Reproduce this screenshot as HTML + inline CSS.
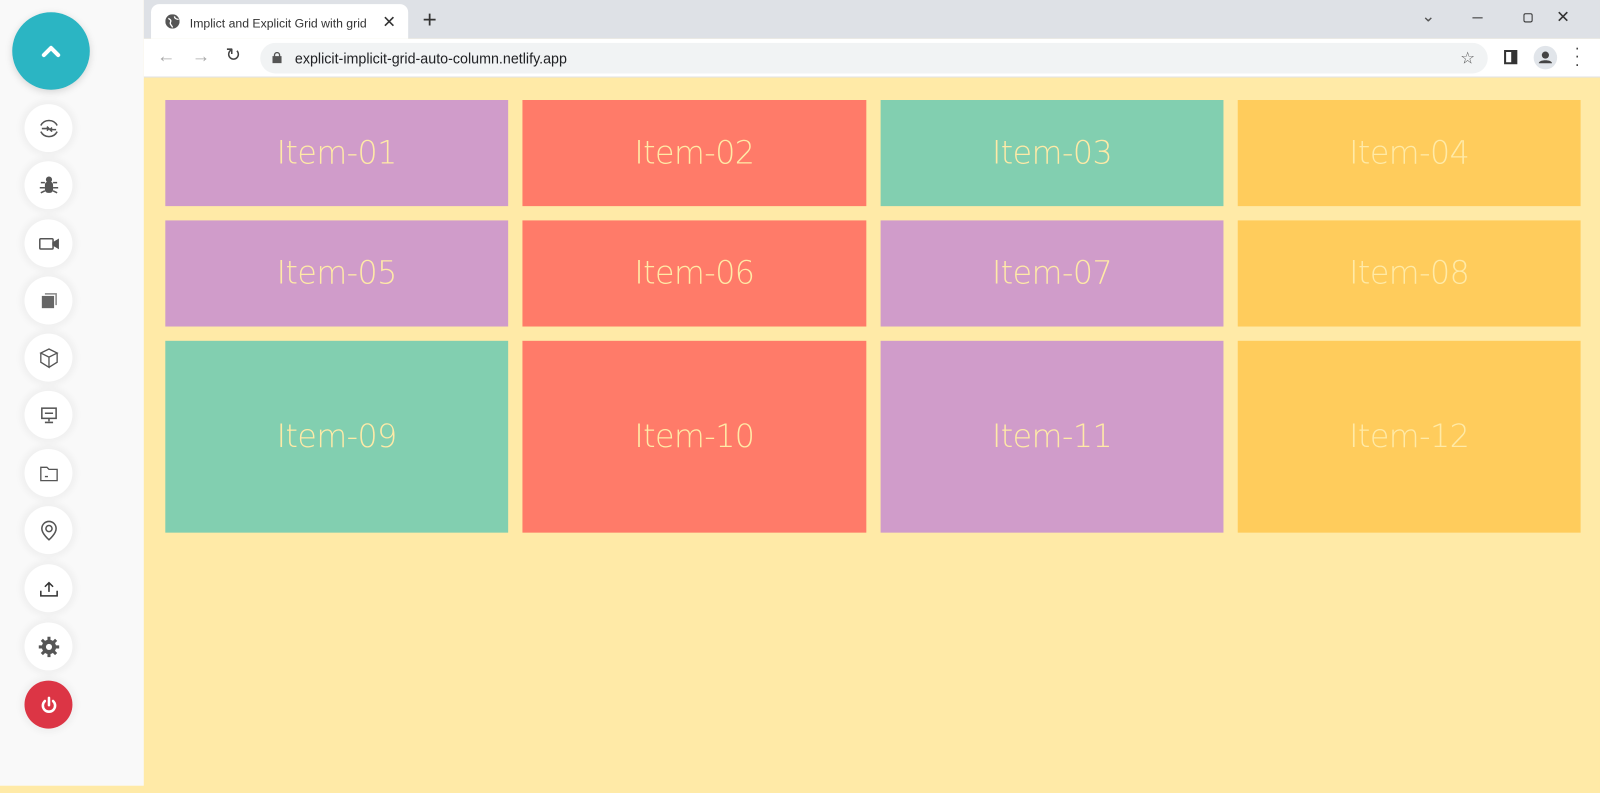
<!DOCTYPE html>
<html><head><meta charset="utf-8"><style>
*{margin:0;padding:0;box-sizing:border-box}
body{width:1600px;height:769px;overflow:hidden;background:#ffeaa7;font-family:"Liberation Sans",sans-serif;position:relative}
#w{position:absolute;left:0;top:0;width:1568px;height:754px;transform:scale(1.0204);transform-origin:0 0}
.side{position:absolute;left:0;top:0;width:141px;height:770px;background:#f9f9f9}
.big{position:absolute;left:12px;top:12px;width:76px;height:76px;border-radius:50%;background:#2bb5c3;box-shadow:0 2px 8px rgba(0,0,0,.15)}
.btn{position:absolute;left:24px;width:47px;height:47px;border-radius:50%;background:#fff;box-shadow:0 0 6px 4px rgba(0,0,0,.04);display:flex;align-items:center;justify-content:center}
.btn svg{width:24px;height:24px}
.tabbar{position:absolute;left:141px;top:0;width:1427px;height:38px;background:#dee1e6}
.tab{position:absolute;left:148px;top:4px;width:252px;height:34px;background:#fff;border-radius:8px 8px 0 0;font-size:12px;color:#333;padding:12px 0 0 38px}
.addr{position:absolute;left:141px;top:38px;width:1427px;height:38px;background:#fff;border-bottom:1px solid #e0e0e0}
.url{position:absolute;left:255px;top:42px;width:1203px;height:30px;border-radius:15px;background:#f1f3f4;font-size:14px;color:#202124;padding:7px 0 0 34px}
.content{position:absolute;left:141px;top:77px;width:1427px;height:700px;background:#ffeaa7}
.it{position:absolute;display:flex;align-items:center;justify-content:center;color:#ffeaa7;font-size:31px;font-family:"DejaVu Sans","Liberation Sans",sans-serif;font-weight:300;letter-spacing:-0.5px}
.p{background:#d09cca}.r{background:#ff7b69}.g{background:#82cfb0}.y{background:#ffcc5c}
</style></head><body><div id="w">
<div class="side">
<div class="big"><svg width="76" height="76"><path d="M31 42 L38 35 L45 42" stroke="#fff" stroke-width="4" fill="none" stroke-linecap="round" stroke-linejoin="round"/></svg></div>
<div class="btn" style="top:102px"><svg viewBox="0 0 24 24" fill="none" stroke="#555" stroke-width="1.5"><path d="M4 9a9 9 0 0 1 16 0M20 15a9 9 0 0 1-16 0M5 12h7M10 10l2 2-2 2M19 13h-6M15 11l-2 2 2 2"/></svg></div>
<div class="btn" style="top:158px"><svg viewBox="0 0 24 24" fill="#555"><rect x="8" y="8" width="8" height="11" rx="3"/><circle cx="12" cy="6" r="3"/><path d="M4 9h4M16 9h4M3 14h5M16 14h5M4 19l4-2M20 19l-4-2" stroke="#555" stroke-width="1.5"/></svg></div>
<div class="btn" style="top:215px"><svg viewBox="0 0 24 24" fill="none" stroke="#555" stroke-width="1.5"><rect x="3" y="7" width="13" height="10" rx="1"/><path d="M16 11l5-3v8l-5-3z" fill="#555"/></svg></div>
<div class="btn" style="top:271px"><svg viewBox="0 0 24 24" fill="#555"><rect x="5" y="7" width="12" height="12" fill="#666"/><path d="M8 5h11v11" stroke="#888" fill="none" stroke-width="1.5"/></svg></div>
<div class="btn" style="top:327px"><svg viewBox="0 0 24 24" fill="none" stroke="#555" stroke-width="1.3"><path d="M12 3l8 4-8 4-8-4zM4 7v9l8 5V11M20 7v9l-8 5"/></svg></div>
<div class="btn" style="top:383px"><svg viewBox="0 0 24 24" fill="none" stroke="#555" stroke-width="1.5"><rect x="5" y="5" width="14" height="10"/><path d="M8 10h8M12 15v3M8 19h8"/></svg></div>
<div class="btn" style="top:440px"><svg viewBox="0 0 24 24" fill="none" stroke="#555" stroke-width="1.3"><path d="M4 6h6l2 2h8v11H4zM8 15h3"/></svg></div>
<div class="btn" style="top:496px"><svg viewBox="0 0 24 24" fill="none" stroke="#555" stroke-width="1.5"><path d="M12 21s-7-6-7-11a7 7 0 0 1 14 0c0 5-7 11-7 11z"/><circle cx="12" cy="10" r="3"/></svg></div>
<div class="btn" style="top:553px"><svg viewBox="0 0 24 24" fill="none" stroke="#333" stroke-width="1.5"><path d="M12 15V6M8 10l4-4 4 4M4 14v5h16v-5"/></svg></div>
<div class="btn" style="top:610px"><svg viewBox="0 0 24 24" fill="#555"><circle cx="12" cy="12" r="7"/><path d="M12 2v20M2 12h20M5 5l14 14M19 5L5 19" stroke="#555" stroke-width="3"/><circle cx="12" cy="12" r="3" fill="#fff"/></svg></div>
<div class="btn" style="top:667px;background:#dc3545"><svg viewBox="0 0 24 24" fill="none" stroke="#fff" stroke-width="2.5" stroke-linecap="round"><path d="M8 8a6 6 0 1 0 8 0M12 5v7"/></svg></div>
</div>
<div class="tabbar"></div>
<div class="tab"><svg style="position:absolute;left:14px;top:10px" width="14" height="14"><circle cx="7" cy="7" r="7" fill="#555"/><path d="M3 4c2 1 3 2 2 4s2 3 2 5M9 2c0 2 2 3 4 3" stroke="#fff" fill="none" stroke-width="1.3"/></svg>Implict and Explicit Grid with grid<span style="position:absolute;right:12px;top:8px;font-size:16px">✕</span></div>
<div style="position:absolute;left:414px;top:6px;font-size:24px;color:#333">+</div>
<div style="position:absolute;left:1393px;top:6px;font-size:16px;color:#555">⌄</div>
<div style="position:absolute;left:1443px;top:17px;width:10px;height:1px;background:#333"></div>
<div style="position:absolute;left:1493px;top:13px;width:9px;height:9px;border:1.3px solid #333;border-radius:2px"></div>
<div style="position:absolute;left:1525px;top:7px;font-size:16px;color:#333">✕</div>
<div class="addr"></div>
<div style="position:absolute;left:154px;top:45px;font-size:18px;color:#aaa">←</div>
<div style="position:absolute;left:188px;top:45px;font-size:18px;color:#aaa">→</div>
<div style="position:absolute;left:221px;top:44px;font-size:18px;color:#444">↻</div>
<div class="url"><svg style="position:absolute;left:12px;top:9px" width="9" height="11"><rect x="0" y="4" width="9" height="7" fill="#555"/><path d="M2 5V3a2.5 2.5 0 0 1 5 0v2" stroke="#555" fill="none" stroke-width="1.3"/></svg>explicit-implicit-grid-auto-column.netlify.app</div>
<div style="position:absolute;left:1431px;top:47px;font-size:16px;color:#555">☆</div>
<div style="position:absolute;left:1474px;top:49px;width:13px;height:14px;border:2px solid #333;border-right-width:6px"></div>
<div style="position:absolute;left:1503px;top:45px;width:23px;height:23px;border-radius:50%;background:#e1e5ea"><svg width="23" height="23"><circle cx="11.5" cy="9" r="3.5" fill="#444"/><path d="M5 17c0-4 13-4 13 0z" fill="#444"/></svg></div>
<div style="position:absolute;left:1543px;top:44px;font-size:16px;color:#444;line-height:8px">·<br>·<br>·</div>
<div class="content"></div>
<div class="it p" style="left:162px;top:98px;width:336px;height:104px">Item-01</div>
<div class="it r" style="left:512px;top:98px;width:337px;height:104px">Item-02</div>
<div class="it g" style="left:863px;top:98px;width:336px;height:104px">Item-03</div>
<div class="it y" style="left:1213px;top:98px;width:336px;height:104px">Item-04</div>
<div class="it p" style="left:162px;top:216px;width:336px;height:104px">Item-05</div>
<div class="it r" style="left:512px;top:216px;width:337px;height:104px">Item-06</div>
<div class="it p" style="left:863px;top:216px;width:336px;height:104px">Item-07</div>
<div class="it y" style="left:1213px;top:216px;width:336px;height:104px">Item-08</div>
<div class="it g" style="left:162px;top:334px;width:336px;height:188px">Item-09</div>
<div class="it r" style="left:512px;top:334px;width:337px;height:188px">Item-10</div>
<div class="it p" style="left:863px;top:334px;width:336px;height:188px">Item-11</div>
<div class="it y" style="left:1213px;top:334px;width:336px;height:188px">Item-12</div>
</div></body></html>
